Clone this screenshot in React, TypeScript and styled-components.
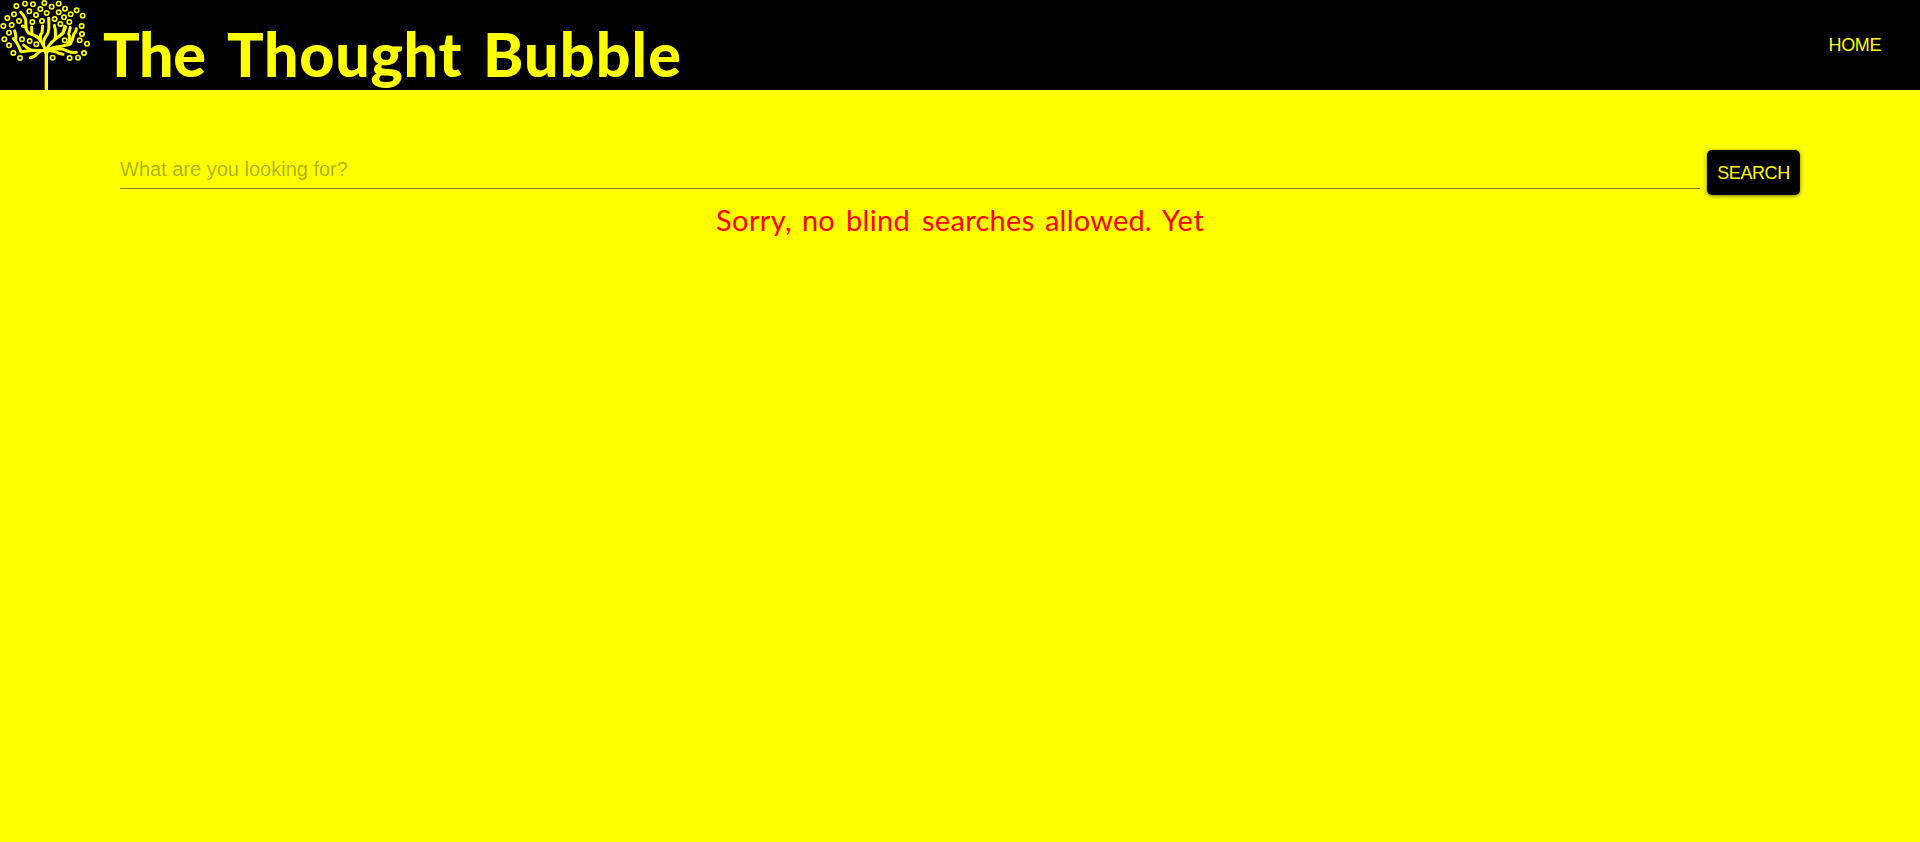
import React from "react";
import styled, { createGlobalStyle } from "styled-components";

const GlobalStyle = createGlobalStyle`
  *, *::before, *::after { box-sizing: border-box; }
  body { margin: 0; background: #ffff00; }
`;

const Page = styled.div`
  min-height: 100vh;
  background: #ffff00;
  font-family: "Liberation Sans", Arial, sans-serif;
`;

const Header = styled.header`
  display: flex;
  align-items: center;
  height: 90px;
  background: #000;
  color: #ffff00;
`;

const Logo = styled.svg`
  display: block;
  width: 96px;
  height: 90px;
  flex: none;
`;

const Title = styled.h1`
  display: flex;
  margin: 0;
  padding: 18px 0 0 7px;
  font: 900 61px/72px Lato, sans-serif;
  white-space: nowrap;
`;

const Word = styled.span<{ $width: number; $spacing?: number }>`
  flex: none;
  width: ${(p) => p.$width}px;
  letter-spacing: ${(p) => p.$spacing ?? 0}px;
`;

const Nav = styled.nav`
  margin-left: auto;
  padding-right: 39px;
`;

const NavLink = styled.a`
  color: #ffff00;
  font-size: 18px;
  line-height: 22px;
  letter-spacing: -0.4px;
  text-decoration: none;
`;

const SearchForm = styled.form`
  display: flex;
  gap: 7px;
  padding: 60px 120px 0;
`;

const SearchInput = styled.input`
  flex: 1;
  min-width: 0;
  height: 39px;
  padding: 0;
  border: 0;
  border-bottom: 1px solid rgba(0, 0, 0, 0.5);
  border-radius: 0;
  outline: 0;
  background: transparent;
  font: 20px "Liberation Sans", Arial, sans-serif;
  &::placeholder { color: rgba(0, 0, 0, 0.32); opacity: 1; }
`;

const SearchButton = styled.button`
  width: 93px;
  height: 45px;
  padding: 2px 0 0;
  border: 0;
  border-radius: 5px;
  background: #000;
  color: #ffff00;
  font: 18px "Liberation Sans", Arial, sans-serif;
  letter-spacing: -0.4px;
  box-shadow: 0 1px 4px rgba(0, 0, 0, 0.5);
`;

const Message = styled.p`
  display: flex;
  justify-content: center;
  margin: 0;
  padding: 5px 0 0 2px;
  color: #ff0000;
  font: 400 29px/40px Lato, sans-serif;
  white-space: nowrap;
`;

const leaves = [
  [49, 18], [75, 11], [99, 13], [133, 9], [176, 11], [121, 27], [155, 20], [195, 26],
  [230, 31], [248, 47], [22, 54], [42, 43], [88, 34], [108, 45], [140, 39], [176, 37],
  [192, 52], [212, 43], [10, 78], [35, 75], [57, 63], [97, 66], [126, 63], [164, 57],
  [181, 72], [208, 66], [245, 78], [13, 118], [27, 98], [66, 118], [89, 123], [109, 133],
  [246, 102], [194, 121], [239, 121], [261, 131], [27, 136], [40, 159], [60, 174],
  [158, 173], [209, 174], [234, 173], [252, 159],
];

const branches = [
  "M138 151 L124 125 Q117 112 103 106 L87 100 Q78 92 78 82 L67 78 M78 83 L77 59 Q73 47 62 36",
  "M96 103 L95 81",
  "M122 120 Q118 108 126 98 L128 78",
  "M131 133 Q130 116 141 105 Q149 94 146 55",
  "M138 151 Q151 129 164 119 L190 99 L194 79",
  "M164 119 Q170 99 163 76",
  "M177 109 Q189 102 197 81",
  "M138 151 Q161 141 188 138 L211 132 Q218 120 222 101 Q228 98 229 86",
  "M203 132 Q213 113 206 102 L211 82",
  "M138 151 Q121 152 99 151 L63 155 L55 137 Q50 125 40 116 M46 122 Q50 110 44 92",
  "M95 151 Q81 145 71 135",
  "M138 151 Q120 150 111 162 Q102 172 91 173",
  "M138 151 Q166 153 176 160 L189 163",
  "M138 151 Q180 140 205 154 Q216 159 229 157",
];

const TreeLogo = () => (
  <Logo viewBox="0 0 288 270" fill="none" stroke="#ffff00" aria-hidden="true">
    <g strokeWidth="5">
      {leaves.map(([x, y]) => <circle key={`${x}-${y}`} cx={x} cy={y} r="6.5" />)}
    </g>
    <g strokeWidth="9" strokeLinecap="round" strokeLinejoin="round">
      {branches.map((d) => <path key={d} d={d} />)}
    </g>
    <path d="M129 145 H149 L144 164 V270 H134 V164 Z" fill="#ffff00" stroke="none" />
  </Logo>
);

export default function App() {
  return (
    <Page>
      <GlobalStyle />
      <Header>
        <TreeLogo />
        <Title>
          <Word $width={124} $spacing={-0.3}>The </Word>
          <Word $width={256} $spacing={0.7}>Thought </Word>
          <Word $width={200} $spacing={1.1}>Bubble</Word>
        </Title>
        <Nav><NavLink href="#">HOME</NavLink></Nav>
      </Header>
      <SearchForm onSubmit={(e) => e.preventDefault()}>
        <SearchInput placeholder="What are you looking for?" />
        <SearchButton type="submit">SEARCH</SearchButton>
      </SearchForm>
      <Message>
        <Word $width={86} $spacing={0.4}>Sorry, </Word>
        <Word $width={44}>no </Word>
        <Word $width={76} $spacing={0.3}>blind </Word>
        <Word $width={123} $spacing={0.3}>searches </Word>
        <Word $width={117} $spacing={0.2}>allowed. </Word>
        <Word $width={44} $spacing={0.7}>Yet</Word>
      </Message>
    </Page>
  );
}
